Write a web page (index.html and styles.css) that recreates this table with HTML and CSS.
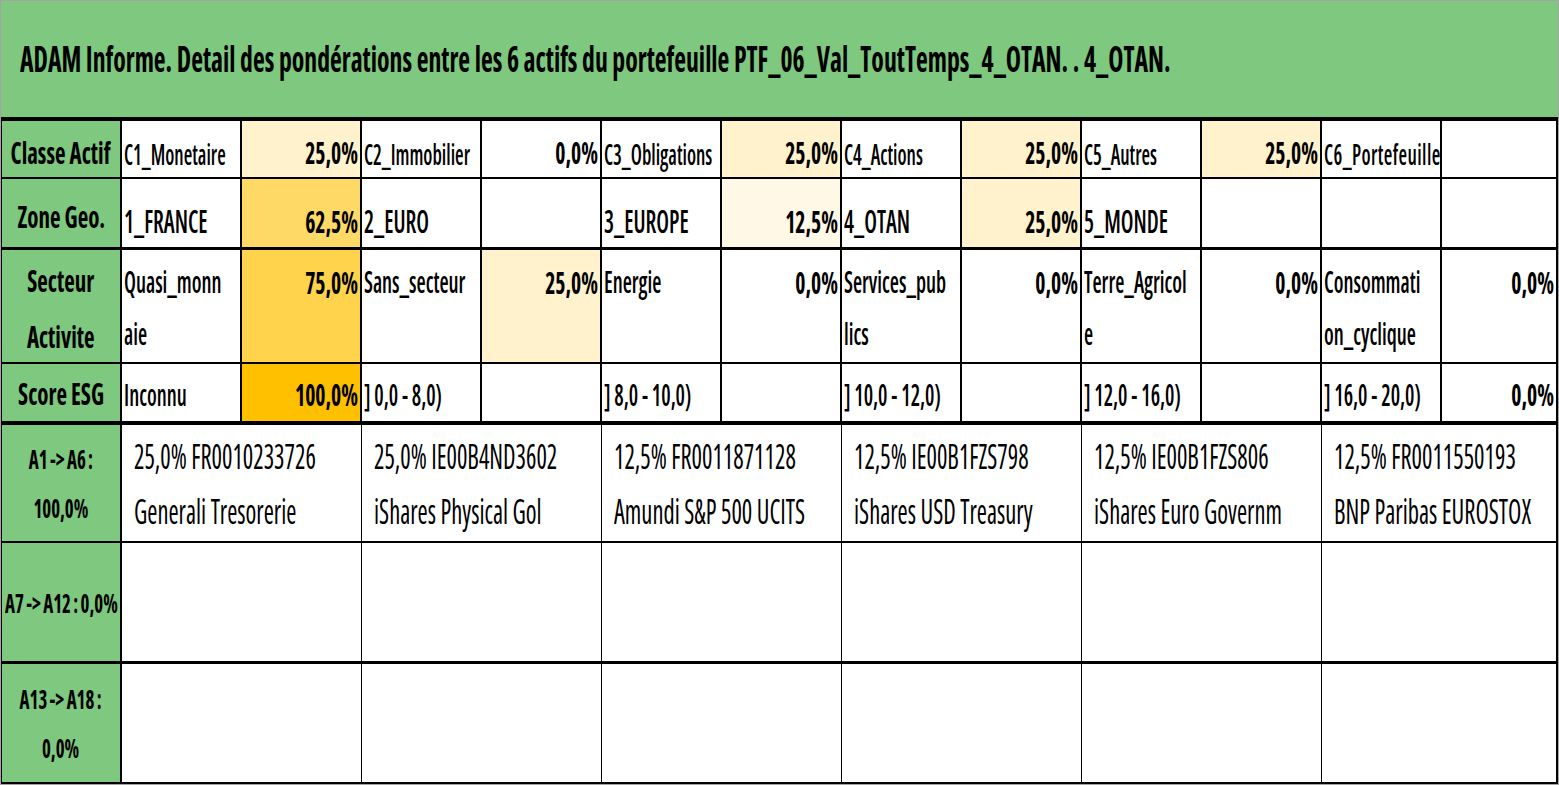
FILE: index.html
```
<!DOCTYPE html>
<html lang="fr">
<head>
<meta charset="utf-8">
<title>ADAM Informe</title>
<link rel="stylesheet" href="styles.css">
</head>
<body>
<div class="sheet">
  <div class="title"><div class="t">ADAM Informe. Detail des pondérations entre les 6 actifs du portefeuille PTF_06_Val_ToutTemps_4_OTAN. . 4_OTAN.</div></div>
  <div class="inner">
    <div class="top">
      <div class="row r1">
        <div class="c lab"><div class="t">Classe Actif</div></div>
        <div class="c nm"><div class="t">C1_Monetaire</div></div>
        <div class="c pc w25"><div class="t">25,0%</div></div>
        <div class="c nm"><div class="t">C2_Immobilier</div></div>
        <div class="c pc"><div class="t">0,0%</div></div>
        <div class="c nm"><div class="t">C3_Obligations</div></div>
        <div class="c pc w25"><div class="t">25,0%</div></div>
        <div class="c nm"><div class="t">C4_Actions</div></div>
        <div class="c pc w25"><div class="t">25,0%</div></div>
        <div class="c nm"><div class="t">C5_Autres</div></div>
        <div class="c pc w25"><div class="t">25,0%</div></div>
        <div class="c nm"><div class="t wide">C6_Portefeuille</div></div>
        <div class="c pc"></div>
      </div>
      <div class="row r2">
        <div class="c lab"><div class="t">Zone Geo.</div></div>
        <div class="c nm"><div class="t">1_FRANCE</div></div>
        <div class="c pc w62"><div class="t">62,5%</div></div>
        <div class="c nm"><div class="t">2_EURO</div></div>
        <div class="c pc"></div>
        <div class="c nm"><div class="t">3_EUROPE</div></div>
        <div class="c pc w12"><div class="t">12,5%</div></div>
        <div class="c nm"><div class="t">4_OTAN</div></div>
        <div class="c pc w25"><div class="t">25,0%</div></div>
        <div class="c nm"><div class="t">5_MONDE</div></div>
        <div class="c pc"></div>
        <div class="c nm"></div>
        <div class="c pc"></div>
      </div>
      <div class="row r3">
        <div class="c lab"><div class="t">Secteur<br>Activite</div></div>
        <div class="c nm"><div class="t">Quasi_monn<br>aie</div></div>
        <div class="c pc w75"><div class="t">75,0%</div></div>
        <div class="c nm"><div class="t">Sans_secteur</div></div>
        <div class="c pc w25"><div class="t">25,0%</div></div>
        <div class="c nm"><div class="t">Energie</div></div>
        <div class="c pc"><div class="t">0,0%</div></div>
        <div class="c nm"><div class="t">Services_pub<br>lics</div></div>
        <div class="c pc"><div class="t">0,0%</div></div>
        <div class="c nm"><div class="t">Terre_Agricol<br>e</div></div>
        <div class="c pc"><div class="t">0,0%</div></div>
        <div class="c nm"><div class="t">Consommati<br>on_cyclique</div></div>
        <div class="c pc"><div class="t">0,0%</div></div>
      </div>
      <div class="row r4">
        <div class="c lab"><div class="t">Score ESG</div></div>
        <div class="c nm"><div class="t">Inconnu</div></div>
        <div class="c pc w100"><div class="t">100,0%</div></div>
        <div class="c nm"><div class="t">] 0,0 - 8,0)</div></div>
        <div class="c pc"></div>
        <div class="c nm"><div class="t">] 8,0 - 10,0)</div></div>
        <div class="c pc"></div>
        <div class="c nm"><div class="t">] 10,0 - 12,0)</div></div>
        <div class="c pc"></div>
        <div class="c nm"><div class="t">] 12,0 - 16,0)</div></div>
        <div class="c pc"></div>
        <div class="c nm"><div class="t">] 16,0 - 20,0)</div></div>
        <div class="c pc"><div class="t">0,0%</div></div>
      </div>
    </div>
    <div class="bottom">
      <div class="brow b1">
        <div class="c blab"><div class="t">A1 -&gt; A6 :<br>100,0%</div></div>
        <div class="c ast"><div class="t">25,0% FR0010233726<br>Generali Tresorerie</div></div>
        <div class="c ast"><div class="t">25,0% IE00B4ND3602<br>iShares Physical Gol</div></div>
        <div class="c ast"><div class="t">12,5% FR0011871128<br>Amundi S&amp;P 500 UCITS</div></div>
        <div class="c ast"><div class="t">12,5% IE00B1FZS798<br>iShares USD Treasury</div></div>
        <div class="c ast"><div class="t">12,5% IE00B1FZS806<br>iShares Euro Governm</div></div>
        <div class="c ast"><div class="t">12,5% FR0011550193<br>BNP Paribas EUROSTOX</div></div>
      </div>
      <div class="brow b2">
        <div class="c blab"><div class="t">A7 -&gt; A12 : 0,0%</div></div>
        <div class="c ast"></div>
        <div class="c ast"></div>
        <div class="c ast"></div>
        <div class="c ast"></div>
        <div class="c ast"></div>
        <div class="c ast"></div>
      </div>
      <div class="brow b3">
        <div class="c blab"><div class="t">A13 -&gt; A18 :<br>0,0%</div></div>
        <div class="c ast"></div>
        <div class="c ast"></div>
        <div class="c ast"></div>
        <div class="c ast"></div>
        <div class="c ast"></div>
        <div class="c ast"></div>
      </div>
    </div>
  </div>
</div>
</body>
</html>
```
FILE: styles.css
```
* { box-sizing: border-box; margin: 0; padding: 0; }

body {
  margin: 0;
  background: #ffffff;
  color: #000000;
  font-family: "Open Sans", "Liberation Sans", sans-serif;
  font-stretch: 75%;
}

.sheet {
  width: 1559px;
  height: 785px;
  border: 1px solid #a3a3a3;
  overflow: hidden;
}

.t {
  white-space: nowrap;
  line-height: 1;
  transform: scaleX(0.7);
  transform-origin: left center;
}

/* title band */
.title {
  height: 116px;
  background: #7ec87f;
  display: flex;
  align-items: center;
  padding-left: 19px;
}
.title .t {
  font-size: 36px;
  font-weight: 700;
  transform: scaleX(0.714);
}

.inner {
  border-left: 1px solid #000;
  border-right: 2px solid #000;
  border-bottom: 2px solid #000;
}

/* top matrix */
.top { border-top: 4px solid #000; }

.row {
  display: grid;
  grid-template-columns: 120px repeat(11, 120px) 1fr;
  border-bottom: 2px solid #000;
}
.r1 { height: 58px; }
.r2 { height: 71px; border-bottom-width: 3px; }
.r3 { height: 114px; }
.r4 { height: 61px; border-bottom-width: 4px; }

.c {
  border-right: 2px solid #000;
  overflow: hidden;
  display: flex;
  flex-direction: column;
  justify-content: flex-end;
  background: #fff;
}
.row .c:last-child, .brow .c:last-child { border-right: 0; }

.lab {
  background: #7ec87f;
  font-weight: 700;
  font-size: 31px;
  align-items: center;
}
.lab .t {
  width: max-content;
  text-align: center;
  transform: scaleX(0.74);
  transform-origin: center center;
}

.nm {
  font-weight: 600;
  padding-left: 2px;
}
.nm .wide { letter-spacing: 0.6px; }
.pc {
  font-weight: 700;
  font-size: 31px;
  padding-right: 2px;
}
.pc .t { text-align: right; transform-origin: right center; }

.w12 { background: #fff8e6; }
.w25 { background: #fff2cc; }
.w62 { background: #ffd966; }
.w75 { background: #ffd34c; }
.w100 { background: #ffc000; }

.r1 .c { padding-bottom: 9px; }
.r1 .nm { font-size: 28px; }

.r2 .c { padding-bottom: 10px; }
.r2 .nm { font-size: 32px; }
.r2 .lab { padding-bottom: 15px; }

.r3 .c { justify-content: flex-start; padding-top: 6px; }
.r3 .t { line-height: 52px; }
.r3 .nm { font-size: 30px; }
.r3 .lab { padding-top: 2px; }
.r3 .lab .t { line-height: 56px; }

.r4 .c { padding-bottom: 11px; }
.r4 .nm { font-size: 30px; }
.r4 .lab { padding-bottom: 12px; }

/* asset rows */
.brow {
  display: grid;
  grid-template-columns: 120px repeat(5, 240px) 1fr;
  border-bottom: 2px solid #000;
}
.b1 { height: 118px; }
.b2 { height: 121px; border-bottom-width: 3px; }
.b3 { height: 118px; border-bottom: 0; }

.brow .c { border-right-width: 1px; }
.brow .blab { border-right-width: 2px; }

.blab {
  background: #7ec87f;
  font-weight: 700;
  font-size: 27px;
  word-spacing: -1.5px;
  justify-content: center;
  align-items: center;
}
.blab .t {
  width: max-content;
  text-align: center;
  transform-origin: center center;
  line-height: 49px;
}

.ast {
  justify-content: flex-start;
  padding: 3px 0 0 12px;
  font-size: 35px;
  font-weight: 400;
}
.ast .t { line-height: 55px; }
```
